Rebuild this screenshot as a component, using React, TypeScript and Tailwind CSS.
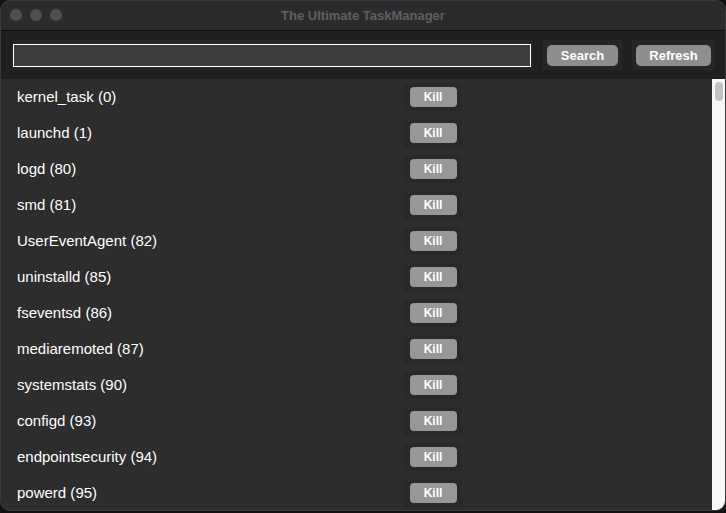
import React, { useState } from 'react';

interface Proc {
  name: string;
  pid: number;
}

const PROCS: Proc[] = [
  { name: 'kernel_task', pid: 0 },
  { name: 'launchd', pid: 1 },
  { name: 'logd', pid: 80 },
  { name: 'smd', pid: 81 },
  { name: 'UserEventAgent', pid: 82 },
  { name: 'uninstalld', pid: 85 },
  { name: 'fseventsd', pid: 86 },
  { name: 'mediaremoted', pid: 87 },
  { name: 'systemstats', pid: 90 },
  { name: 'configd', pid: 93 },
  { name: 'endpointsecurity', pid: 94 },
  { name: 'powerd', pid: 95 },
];

const ToolButton: React.FC<{ label: string; width: string }> = ({ label, width }) => (
  <div className={`h-[30px] p-[4px] flex items-center bg-[#262626] ${width}`}>
    <button className="w-full h-[21px] rounded-[5px] bg-[#8e8e8e] text-white text-[13px] font-bold leading-none">
      {label}
    </button>
  </div>
);

const App: React.FC = () => {
  const [query, setQuery] = useState('');

  return (
    <div className="w-[726px] h-[513px] bg-[#141014] font-['Liberation_Sans',Arial,sans-serif]">
      <div className="w-[726px] h-[511px] rounded-[10px] overflow-hidden flex flex-col bg-[#2d2d2d] border border-[#3a3a3a]">
        {/* Title bar */}
        <div className="relative h-[30px] shrink-0 flex items-center justify-center bg-[#2a2b2c] border-b border-[#0c0c0c]">
          <div className="absolute left-[9px] top-[8px] flex gap-[8px]">
            <span className="w-[12px] h-[12px] rounded-full bg-[#4e4f50]" />
            <span className="w-[12px] h-[12px] rounded-full bg-[#4e4f50]" />
            <span className="w-[12px] h-[12px] rounded-full bg-[#4e4f50]" />
          </div>
          <span className="text-[13px] font-bold text-[#5e5f60]">The Ultimate TaskManager</span>
        </div>

        {/* Toolbar */}
        <div className="h-[48px] shrink-0 flex items-center gap-[10px] pl-[11px] pr-[10px] bg-[#1f1f1f]">
          <div className="flex-1 h-[30px] flex items-center bg-[#262626] pl-px">
            <input
              value={query}
              onChange={(e) => setQuery(e.target.value)}
              className="w-[518px] h-[23px] bg-[#3d3d3d] border border-white outline-none text-white text-[13px] px-1"
            />
          </div>
          <ToolButton label="Search" width="w-[79px]" />
          <ToolButton label="Refresh" width="w-[83px]" />
        </div>

        {/* Process list */}
        <div className="flex-1 flex min-h-0">
          <div className="flex-1 flex flex-col">
            {PROCS.map((p) => (
              <div key={p.pid} className="h-[36px] shrink-0 flex items-center">
                <span className="w-[403px] pl-[16px] text-white text-[15px]">
                  {p.name} ({p.pid})
                </span>
                <div className="h-[28px] w-[58px] flex items-center justify-center bg-[#292929]">
                  <button className="w-[47px] h-[20px] rounded-[4px] bg-[#979797] text-white text-[12px] font-bold leading-none">
                    Kill
                  </button>
                </div>
              </div>
            ))}
          </div>
          <div className="w-[13px] shrink-0 bg-[#f8f8f8] flex justify-center pt-[3px]">
            <div className="w-[8px] h-[19px] rounded-full bg-[#c3c3c3]" />
          </div>
        </div>
      </div>
    </div>
  );
};

export default App;
